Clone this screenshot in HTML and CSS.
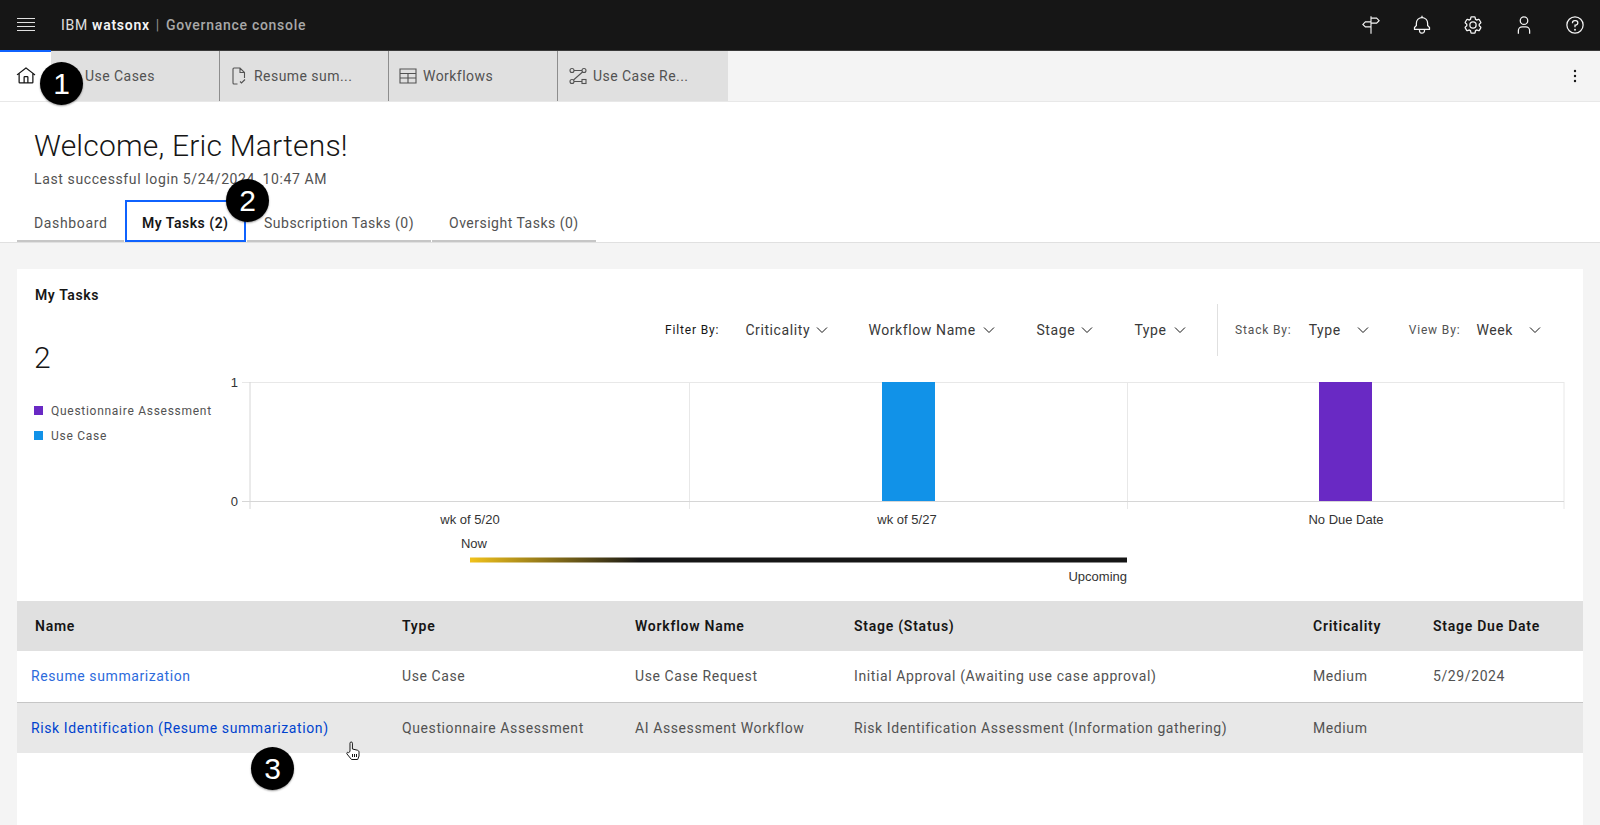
FILE: index.html
```html
<!DOCTYPE html>
<html lang="en">
<head>
<meta charset="utf-8">
<title>IBM watsonx Governance console</title>
<link rel="stylesheet" href="styles.css">
</head>
<body>
<header class="topbar">
  <div class="brand">
    <svg class="menu-icon" viewBox="0 0 20 20"><path d="M1 3.5h18M1 7.5h18M1 11.5h18M1 15.5h18"/></svg>
    <span class="brand-ibm">IBM <b>watsonx</b></span><span class="brand-sep">|</span><span class="brand-name">Governance console</span>
  </div>
  <div class="top-actions">
    <svg class="top-icon" viewBox="0 0 32 32"><path class="line" d="M16 2v28M16 5h9l4 4-4 4H16M16 11H7l-4 4 4 4h9"/></svg>
    <svg class="top-icon" viewBox="0 0 32 32"><path d="M28.7071,19.293,26,16.5859V13a10.0136,10.0136,0,0,0-9-9.9492V1H15V3.0508A10.0136,10.0136,0,0,0,6,13v3.5859L3.2929,19.293A1,1,0,0,0,3,20v3a1,1,0,0,0,1,1h7v.7768a5.152,5.152,0,0,0,4.5,5.1987A5.0057,5.0057,0,0,0,21,25V24h7a1,1,0,0,0,1-1V20A1,1,0,0,0,28.7071,19.293ZM19,25a3,3,0,0,1-6,0V24h6Zm8-3H5V20.4141L7.707,17.707A1,1,0,0,0,8,17V13a8,8,0,0,1,16,0v4a1,1,0,0,0,.293.707L27,20.4141Z"/></svg>
    <svg class="top-icon" viewBox="0 0 32 32"><path d="M27,16.76c0-.25,0-.5,0-.76s0-.51,0-.77l1.92-1.68A2,2,0,0,0,29.3,11L26.94,7a2,2,0,0,0-1.73-1,2,2,0,0,0-.64.1l-2.43.82a11.35,11.35,0,0,0-1.31-.75l-.51-2.52a2,2,0,0,0-2-1.61H13.64a2,2,0,0,0-2,1.61l-.51,2.52a11.48,11.48,0,0,0-1.32.75L7.43,6.06A2,2,0,0,0,6.79,6,2,2,0,0,0,5.06,7L2.7,11a2,2,0,0,0,.41,2.51L5,15.24c0,.25,0,.5,0,.76s0,.51,0,.77L3.11,18.45A2,2,0,0,0,2.7,21L5.06,25a2,2,0,0,0,1.73,1,2,2,0,0,0,.64-.1l2.43-.82a11.35,11.35,0,0,0,1.31.75l.51,2.52a2,2,0,0,0,2,1.61h4.72a2,2,0,0,0,2-1.61l.51-2.52a11.48,11.48,0,0,0,1.32-.75l2.42.82a2,2,0,0,0,.64.1,2,2,0,0,0,1.73-1L29.3,21a2,2,0,0,0-.41-2.51ZM25.21,24l-3.43-1.16a8.86,8.86,0,0,1-2.71,1.57L18.36,28H13.64l-.71-3.55a9.36,9.36,0,0,1-2.7-1.57L6.79,24,4.43,20l2.72-2.4a8.9,8.9,0,0,1,0-3.13L4.43,12,6.79,8l3.43,1.16a8.86,8.86,0,0,1,2.71-1.57L13.64,4h4.72l.71,3.55a9.36,9.36,0,0,1,2.7,1.57L25.21,8,27.57,12l-2.72,2.4a8.9,8.9,0,0,1,0,3.13L27.57,20Z"/><path d="M16,22a6,6,0,1,1,6-6A5.94,5.94,0,0,1,16,22Zm0-10a3.91,3.91,0,0,0-4,4,3.91,3.91,0,0,0,4,4,3.91,3.91,0,0,0,4-4A3.91,3.91,0,0,0,16,12Z"/></svg>
    <svg class="top-icon" viewBox="0 0 32 32"><path d="M16,4a5,5,0,1,1-5,5,5,5,0,0,1,5-5m0-2a7,7,0,1,0,7,7A7,7,0,0,0,16,2Z"/><path d="M26,30H24V25a5,5,0,0,0-5-5H13a5,5,0,0,0-5,5v5H6V25a7,7,0,0,1,7-7h6a7,7,0,0,1,7,7Z"/></svg>
    <svg class="top-icon" viewBox="0 0 32 32"><path d="M16,2A14,14,0,1,0,30,16,14,14,0,0,0,16,2Zm0,26A12,12,0,1,1,28,16,12,12,0,0,1,16,28Z"/><circle cx="16" cy="23.5" r="1.5"/><path d="M17,8H15.5A4.49,4.49,0,0,0,11,12.5V13h2v-.5A2.5,2.5,0,0,1,15.5,10H17a2.5,2.5,0,0,1,0,5H15v4.5h2V17a4.5,4.5,0,0,0,0-9Z"/></svg>
  </div>
</header>

<nav class="tabbar">
  <div class="tab-home">
    <svg class="home-icon" viewBox="0 0 32 32"><path d="M16.6123,2.2138a1.01,1.01,0,0,0-1.2427,0L1,13.4194l1.2427,1.5717L4,13.6209V26a2.0041,2.0041,0,0,0,2,2H26a2.0037,2.0037,0,0,0,2-2V13.63L29.7573,15,31,13.4282ZM18,26H14V18h4Zm2,0V18a2.0023,2.0023,0,0,0-2-2H14a2.002,2.002,0,0,0-2,2v8H6V12.0615l10-7.79,10,7.8005V26Z"/></svg>
  </div>
  <div class="tab-item"><span class="tab-spacer"></span><span>Use Cases</span></div>
  <div class="tab-item">
    <svg class="tab-icon" viewBox="0 0 20 20"><path d="M8.5 18H5a1 1 0 0 1-1-1V3a1 1 0 0 1 1-1h6l4.500 4.500V12M11 2v4.500h4.500M11 15.500l1.500 1.500 3.500-3.500"/></svg>
    <span>Resume sum...</span>
  </div>
  <div class="tab-item">
    <svg class="tab-icon" viewBox="0 0 20 20"><path d="M2 3h16v14H2zM2 7.5h16M2 12h16M10 7.5V17"/></svg>
    <span>Workflows</span>
  </div>
  <div class="tab-item">
    <svg class="tab-icon" viewBox="0 0 20 20"><circle cx="4" cy="4.500" r="2"/><circle cx="16" cy="4.500" r="2"/><circle cx="4" cy="15.500" r="2"/><rect x="14" y="13.500" width="4" height="4"/><path d="M6 4.500h8M14.500 6l-9 8M6 15.500h8"/></svg>
    <span>Use Case Re...</span>
  </div>
  <div class="tabbar-fill">
    <svg class="overflow-icon" viewBox="0 0 16 16"><circle cx="8" cy="3" r="1.2"/><circle cx="8" cy="8" r="1.2"/><circle cx="8" cy="13" r="1.2"/></svg>
  </div>
</nav>

<section class="welcome">
  <h1 class="welcome-title">Welcome, Eric Martens!</h1>
  <p class="welcome-sub">Last successful login 5/24/2024, 10:47 AM</p>
  <div class="page-tabs">
    <div class="page-tab tab-dash">Dashboard</div>
    <div class="page-tab tab-active">My Tasks (2)</div>
    <div class="page-tab tab-sub">Subscription Tasks (0)</div>
    <div class="page-tab tab-over">Oversight Tasks (0)</div>
  </div>
</section>

<main class="content">
  <section class="card">
    <div class="chart-section">
      <div class="summary">
        <h2 class="card-title">My Tasks</h2>
        <div class="total">2</div>
        <ul class="legend">
          <li><i class="swatch swatch-purple"></i>Questionnaire Assessment</li>
          <li><i class="swatch swatch-blue"></i>Use Case</li>
        </ul>
      </div>
      <div class="chart-side">
        <div class="filters">
          <div class="filter-group group-filter">
            <span class="filter-label">Filter By:</span>
            <span class="select sel-crit">Criticality<svg class="chev" viewBox="0 0 12 12"><path d="M1 3.500l5 5 5-5"/></svg></span>
            <span class="select sel-wf">Workflow Name<svg class="chev" viewBox="0 0 12 12"><path d="M1 3.500l5 5 5-5"/></svg></span>
            <span class="select sel-stage">Stage<svg class="chev" viewBox="0 0 12 12"><path d="M1 3.500l5 5 5-5"/></svg></span>
            <span class="select sel-type">Type<svg class="chev" viewBox="0 0 12 12"><path d="M1 3.500l5 5 5-5"/></svg></span>
          </div>
          <div class="filter-group group-view">
            <span class="filter-label muted">Stack By:</span>
            <span class="select sel-stack">Type<svg class="chev" viewBox="0 0 12 12"><path d="M1 3.500l5 5 5-5"/></svg></span>
            <span class="filter-label muted label-view">View By:</span>
            <span class="select sel-week">Week<svg class="chev" viewBox="0 0 12 12"><path d="M1 3.500l5 5 5-5"/></svg></span>
          </div>
        </div>
        <svg class="chart" viewBox="0 0 1370 235" width="1370" height="235">
          <defs>
            <linearGradient id="nowGrad" x1="0" x2="1" y1="0" y2="0">
              <stop offset="0" stop-color="#f1c21b"/>
              <stop offset="0.26" stop-color="#161616"/>
              <stop offset="1" stop-color="#161616"/>
            </linearGradient>
          </defs>
          <g class="grid">
            <path d="M56 -.5H1370M495.500 -1V126M933.500 -1V126M1370 -1V126M48 -.5H56"/>
          </g>
          <g class="axis">
            <path d="M56 -1V126M48 118.500H1370"/>
          </g>
          <rect x="688" y="-1" width="53" height="119" fill="#1192e8"/>
          <rect x="1125" y="-1" width="53" height="119" fill="#6929c4"/>
          <text class="chart-text" x="44" y="4" text-anchor="end">1</text>
          <text class="chart-text" x="44" y="123" text-anchor="end">0</text>
          <text class="chart-text" x="276" y="141" text-anchor="middle">wk of 5/20</text>
          <text class="chart-text" x="713" y="141" text-anchor="middle">wk of 5/27</text>
          <text class="chart-text" x="1152" y="141" text-anchor="middle">No Due Date</text>
          <text class="chart-text" x="280" y="165" text-anchor="middle">Now</text>
          <rect x="276" y="174.500" width="657" height="5" fill="url(#nowGrad)"/>
          <text class="chart-text" x="933" y="198" text-anchor="end">Upcoming</text>
        </svg>
      </div>
    </div>

    <table class="tasks">
      <colgroup>
        <col class="col-name"><col class="col-type"><col class="col-wf"><col class="col-stage"><col class="col-crit"><col class="col-due">
      </colgroup>
      <thead>
        <tr><th>Name</th><th>Type</th><th>Workflow Name</th><th>Stage (Status)</th><th>Criticality</th><th>Stage Due Date</th></tr>
      </thead>
      <tbody>
        <tr>
          <td class="cell-name"><a class="task-link" href="#">Resume summarization</a></td>
          <td>Use Case</td><td>Use Case Request</td><td>Initial Approval (Awaiting use case approval)</td><td>Medium</td><td>5/29/2024</td>
        </tr>
        <tr class="row-hover">
          <td class="cell-name"><a class="task-link" href="#">Risk Identification (Resume summarization)</a></td>
          <td>Questionnaire Assessment</td><td>AI Assessment Workflow</td><td>Risk Identification Assessment (Information gathering)</td><td>Medium</td><td></td>
        </tr>
      </tbody>
    </table>
  </section>
</main>

<div class="badge badge-1">1</div>
<div class="badge badge-2">2</div>
<div class="badge badge-3">3</div>
<svg class="cursor" viewBox="0 0 16 20"><path d="M5 10.500V2.200a1.200 1.200 0 0 1 2.400 0V8l5 1.200c1 .3 1.600 1 1.600 2V15l-1.300 3.500H6.500L2 13c-.8-1 .4-2.300 1.500-1.400z"/><path d="M7.500 13v3M9.500 13v3M11.500 13v3"/></svg>
</body>
</html>
```

FILE: styles.css
```css
* { box-sizing: border-box; }

html, body {
  margin: 0;
  height: 825px;
  overflow: hidden;
}

body {
  position: relative;
  background: #f4f4f4;
  color: #525252;
  font-family: Roboto, "Noto Sans", sans-serif;
  font-size: 14px;
  letter-spacing: .6px;
}

/* top bar */
.topbar {
  height: 51px;
  background: #161616;
  border-bottom: 1px solid #393939;
  display: flex;
  align-items: center;
  justify-content: space-between;
  padding: 0 17px 0 16px;
}

.brand {
  display: flex;
  align-items: center;
  font-size: 14px;
  letter-spacing: .72px;
  color: #e0e0e0;
}

.menu-icon {
  width: 20px;
  height: 20px;
  margin-right: 25px;
  fill: none;
  stroke: #e0e0e0;
  stroke-width: 1.2;
}

.brand-ibm b { font-weight: 600; color: #f4f4f4; }
.brand-sep { margin: 0 6px; color: #8d8d8d; }
.brand-name { color: #a8a8a8; font-weight: 500; }

.top-actions {
  display: flex;
  gap: 31px;
  margin-right: -2px;
}

.top-icon {
  width: 20px;
  height: 20px;
  fill: #f4f4f4;
}

.top-icon .line {
  fill: none;
  stroke: #f4f4f4;
  stroke-width: 1.8;
}

/* app tabs */
.tabbar {
  height: 51px;
  display: flex;
  background: #f4f4f4;
  border-bottom: 1px solid #e8e8e8;
  letter-spacing: .45px;
}

.tab-home {
  width: 51px;
  background: #fff;
  border-top: 2px solid #0f62fe;
  margin-top: -1px;
  padding: 14px 0 0 16px;
}

.home-icon {
  width: 20px;
  height: 20px;
  fill: #161616;
  display: block;
}

.tab-item {
  width: 169px;
  background: #e0e0e0;
  border-right: 1px solid #8d8d8d;
  display: flex;
  align-items: center;
  gap: 5px;
  padding-left: 9px;
  color: #525252;
}

.tab-item:nth-child(5) { border-right: 0; width: 170px; padding-left: 10px; }

.tab-spacer { width: 20px; }

.tab-icon {
  width: 20px;
  height: 20px;
  fill: none;
  stroke: #525252;
  stroke-width: 1.1;
}

.tabbar-fill {
  flex: 1;
  display: flex;
  justify-content: flex-end;
  align-items: center;
  padding-right: 17px;
}

.overflow-icon { width: 16px; height: 16px; fill: #161616; }

/* welcome */
.welcome {
  background: #fff;
  height: 141px;
  padding: 24px 0 0 17px;
  border-bottom: 1px solid #e0e0e0;
}

.welcome-title {
  margin: 0 0 0 17px;
  font-size: 30px;
  line-height: 40px;
  font-weight: 300;
  letter-spacing: .2px;
  color: #161616;
}

.welcome-sub {
  margin: 3px 0 0 17px;
  font-size: 14px;
  line-height: 20px;
  color: #525252;
  letter-spacing: .62px;
}

.page-tabs {
  display: flex;
  margin-top: 11px;
  height: 42px;
  letter-spacing: .5px;
}

.page-tab {
  display: flex;
  align-items: center;
  padding-left: 17px;
  border-bottom: 2px solid #c6c6c6;
  margin-right: 1px;
  padding-top: 6px;
}

.tab-dash { width: 107px; letter-spacing: .65px; }
.tab-sub { width: 184px; }
.tab-over { width: 164px; padding-left: 17px; margin-right: 0; }

.tab-active {
  width: 121px;
  border: 2px solid #0f62fe;
  color: #161616;
  font-weight: 600;
  padding-left: 15px;
  padding-top: 4px;
}

/* content */
.content { padding: 26px 17px 0; }

.card { background: #fff; height: 560px; }

.chart-section {
  height: 332px;
  display: flex;
}

.summary { width: 196px; padding: 17px 0 0 17px; flex: none; }

.card-title {
  margin: 0 0 0 1px;
  font-size: 14px;
  line-height: 18px;
  font-weight: 600;
  color: #161616;
}

.total {
  margin-top: 36px;
  font-size: 30px;
  line-height: 36px;
  font-weight: 300;
  color: #161616;
}

.legend {
  list-style: none;
  margin: 22px 0 0;
  padding: 0;
  font-size: 12px;
  letter-spacing: .72px;
  white-space: nowrap;
}

.legend li {
  display: flex;
  align-items: center;
  height: 25px;
}

.swatch {
  width: 9px;
  height: 9px;
  margin-right: 8px;
}

.swatch-purple { background: #6929c4; }
.swatch-blue { background: #1192e8; }

.chart-side { flex: 1; min-width: 0; }

.filters {
  height: 114px;
  display: flex;
  padding: 35px 0 0 452px;
  align-items: flex-start;
}

.filter-group {
  display: flex;
  align-items: center;
  height: 52px;
}

.group-filter { width: 552px; }

.group-view {
  border-left: 1px solid #e0e0e0;
  padding-left: 17px;
  flex: 1;
}

.filter-label { font-size: 12px; letter-spacing: .85px; color: #161616; }
.filter-label.muted { color: #525252; }

.select {
  display: flex;
  align-items: center;
  justify-content: space-between;
  color: #393939;
}

.chev {
  width: 12px;
  height: 12px;
  fill: none;
  stroke: #161616;
  stroke-width: 1;
}

.sel-crit { width: 83px; margin-left: 26px; }
.sel-wf { width: 127px; margin-left: 40px; }
.sel-stage { width: 57px; margin-left: 41px; }
.sel-type { width: 52px; margin-left: 41px; }
.sel-stack { width: 60px; margin-left: 17px; }
.label-view { margin-left: 40px; }
.sel-week { width: 65px; margin-left: 16px; }

.chart { display: block; margin-left: -19px; overflow: visible; }

.grid path { fill: none; stroke: #e8e8e8; stroke-width: 1; }
.axis path { fill: none; stroke: #d6d6d6; stroke-width: 1; }

.chart-text {
  font-family: "Liberation Sans", Arial, sans-serif;
  font-size: 13px;
  letter-spacing: 0;
  fill: #333;
}

/* table */
.tasks {
  width: 100%;
  border-collapse: collapse;
  table-layout: fixed;
}

.col-name { width: 368px; }
.col-type { width: 233px; }
.col-wf { width: 219px; }
.col-stage { width: 459px; }
.col-crit { width: 120px; }

.tasks th {
  height: 50px;
  background: #e0e0e0;
  text-align: left;
  font-weight: 600;
  letter-spacing: .75px;
  color: #161616;
  padding: 0 0 0 17px;
}

.tasks th:first-child { padding-left: 18px; }

.tasks td {
  height: 51px;
  padding: 0 0 0 17px;
  white-space: nowrap;
}

.tasks td.cell-name { padding-left: 14px; }

.tasks tbody tr:first-child td { border-bottom: 1px solid #c6c6c6; }

.row-hover td { background: #e8e8e8; }

.task-link { color: #2d6bdc; text-decoration: none; }
.row-hover .task-link { color: #0043ce; }

/* overlays */
.badge {
  position: absolute;
  width: 43px;
  height: 43px;
  border-radius: 50%;
  background: #000;
  color: #fff;
  display: flex;
  align-items: center;
  justify-content: center;
  font-family: "Liberation Sans", Arial, sans-serif;
  font-size: 30px;
  letter-spacing: 0;
  box-shadow: 0 1px 2px rgba(0,0,0,.4);
}

.badge-1 { left: 40px; top: 62px; }
.badge-2 { left: 226px; top: 179px; }
.badge-3 { left: 251px; top: 747px; }

.cursor {
  position: absolute;
  left: 345px;
  top: 741px;
  width: 16px;
  height: 20px;
  fill: #fff;
  stroke: #161616;
  stroke-width: 1;
}
```
